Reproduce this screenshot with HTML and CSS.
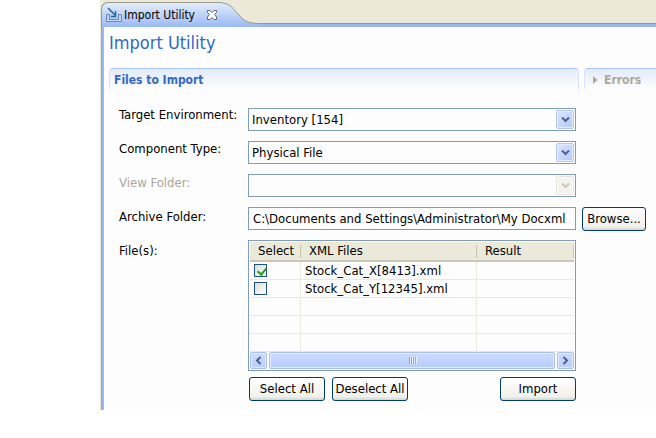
FILE: index.html
```html
<!DOCTYPE html>
<html lang="en">
<head>
<meta charset="utf-8">
<title>Import Utility</title>
<link rel="stylesheet" href="styles.css">
</head>
<body>
<main class="view">
  <header class="tabbar">
    <div class="tab">
      <svg class="tab-icon" width="16" height="16" viewBox="0 0 16 16" aria-hidden="true">
        <path d="M4 7.500H0.500V14.500H15.500V7.500H12" fill="none" stroke="#6e86ae"/>
        <path d="M3.500 7V12.500H12.500V7" fill="none" stroke="#6e86ae"/>
        <path d="M1 13.500H15M2 8V13M14 8V13" stroke="#c7dcf3"/>
        <path d="M2 1L9 8M9.500 4V9.500H5" fill="none" stroke="#27669b" stroke-width="1.500"/>
      </svg>
      <span class="tab-title">Import Utility</span>
      <button class="close" type="button" aria-label="Close">
        <svg width="12" height="12" viewBox="0 0 12 12" aria-hidden="true">
          <path d="M1.500 1.500H4L6 3.500L8 1.500H10.500V3.500L8.500 5.500L10.500 8V10.500H8L6 8.500L4 10.500H1.500V8L3.500 5.500L1.500 3.500Z" fill="#fff" stroke="#68675f"/>
        </svg>
      </button>
    </div>
    <svg class="curve" width="44" height="27" viewBox="0 0 44 27" aria-hidden="true">
      <defs>
        <linearGradient id="tabfill" x1="0" y1="0" x2="0" y2="1">
          <stop offset="0" stop-color="#e4edfc"/>
          <stop offset="1" stop-color="#99b9f4"/>
        </linearGradient>
      </defs>
      <path d="M0 2C13 2 15 9 21 15C27 22 31 23.500 44 23.500V27H0Z" fill="url(#tabfill)"/>
      <path d="M0 2.500C13 2.500 15 9 21 15C27 22 31 23.500 44 23.500" fill="none" stroke="#9a9888"/>
    </svg>
    <div class="rest"></div>
  </header>

  <div class="page">
    <h1>Import Utility</h1>
    <div class="sections">
      <h2 class="section">Files to Import</h2>
      <h2 class="section muted">
        <svg width="5" height="8" viewBox="0 0 5 8" aria-hidden="true"><path d="M0 0L4.500 4L0 8Z" fill="#aca899"/></svg>
        Errors
      </h2>
    </div>

    <form class="form">
      <div class="labels">
        <label for="env">Target Environment:</label>
        <label for="type">Component Type:</label>
        <label for="view" class="off">View Folder:</label>
        <label for="archive">Archive Folder:</label>
        <span id="files">File(s):</span>
      </div>
      <div class="fields">
        <div class="combo">
          <select id="env"><option>Inventory [154]</option></select>
          <span class="drop"><svg width="9" height="7" viewBox="0 0 9 7" aria-hidden="true"><path d="M1 1.500L4.500 5L8 1.500" fill="none" stroke="#4d6185" stroke-width="2"/></svg></span>
        </div>
        <div class="combo">
          <select id="type"><option>Physical File</option></select>
          <span class="drop"><svg width="9" height="7" viewBox="0 0 9 7" aria-hidden="true"><path d="M1 1.500L4.500 5L8 1.500" fill="none" stroke="#4d6185" stroke-width="2"/></svg></span>
        </div>
        <div class="combo">
          <select id="view" disabled></select>
          <span class="drop drop-off"><svg width="9" height="7" viewBox="0 0 9 7" aria-hidden="true"><path d="M1 1.500L4.500 5L8 1.500" fill="none" stroke="#c9c7ba" stroke-width="2"/></svg></span>
        </div>
        <input class="path" id="archive" type="text" value="C:\Documents and Settings\Administrator\My Docxml">
        <div class="list">
          <table aria-labelledby="files">
            <colgroup><col class="c-select"><col class="c-file"><col></colgroup>
            <thead>
              <tr><th>Select</th><th>XML Files</th><th>Result</th></tr>
            </thead>
            <tbody>
              <tr><td><input type="checkbox" aria-label="Select Stock_Cat_X[8413].xml" checked></td><td>Stock_Cat_X[8413].xml</td><td></td></tr>
              <tr><td><input type="checkbox" aria-label="Select Stock_Cat_Y[12345].xml"></td><td>Stock_Cat_Y[12345].xml</td><td></td></tr>
              <tr><td></td><td></td><td></td></tr>
              <tr><td></td><td></td><td></td></tr>
              <tr><td></td><td></td><td></td></tr>
            </tbody>
          </table>
          <div class="scroll">
            <button class="arrow" type="button" aria-label="Scroll left"><svg width="7" height="9" viewBox="0 0 7 9" aria-hidden="true"><path d="M5.500 1L2 4.500L5.500 8" fill="none" stroke="#4d6185" stroke-width="2"/></svg></button>
            <div class="thumb"><i></i><i></i><i></i><i></i></div>
            <button class="arrow" type="button" aria-label="Scroll right"><svg width="7" height="9" viewBox="0 0 7 9" aria-hidden="true"><path d="M1.500 1L5 4.500L1.500 8" fill="none" stroke="#4d6185" stroke-width="2"/></svg></button>
          </div>
        </div>
        <div class="actions">
          <button class="btn" type="button">Select All</button>
          <button class="btn" type="button">Deselect All</button>
          <button class="btn last" type="button">Import</button>
        </div>
      </div>
      <button class="btn browse" type="button">Browse...</button>
    </form>
  </div>
</main>
</body>
</html>
```
FILE: styles.css
```css
* {
  box-sizing: border-box;
}

body {
  margin: 0;
  background: #fff;
  color: #000;
  font: 13px/16px "DejaVu Sans Condensed", "DejaVu Sans", "Noto Sans", sans-serif;
}

button,
input,
select {
  margin: 0;
  font: inherit;
  color: inherit;
}

.view {
  margin-left: 100px;
  border-left: 1px solid #ece9d8;
}

.tabbar {
  display: flex;
  height: 27px;
  background: #ece9d8;
}

.tab {
  display: flex;
  align-items: center;
  width: 117px;
  padding: 0 0 1px 4px;
  border: 1px solid #9a9888;
  border-width: 1px 0 0 1px;
  border-radius: 7px 0 0 0;
  margin-top: 2px;
  background: linear-gradient(#e4edfc, #99b9f4);
  font-size: 12px;
}

.tab-icon {
  flex: none;
}

.tab-title {
  flex: 1;
  margin-left: 2px;
  white-space: nowrap;
}

.close {
  display: flex;
  padding: 0;
  border: 0;
  background: none;
}

.curve {
  flex: none;
}

.rest {
  flex: 1;
  align-self: flex-end;
  height: 4px;
  border-top: 1px solid #9a9888;
  background: #99b9f4;
}

.page {
  padding: 6px 0 9px 7px;
  border-left: 1px solid #aca899;
  background: #fdfdfd;
  box-shadow: inset 2px 0 #99b9f4;
}

h1 {
  margin: 0;
  color: #316ac5;
  font-size: 18px;
  font-weight: 400;
  line-height: 20px;
}

.sections {
  display: grid;
  grid-template-columns: 1fr 72px;
  gap: 5px;
  margin-top: 15px;
}

.section {
  display: flex;
  align-items: center;
  gap: 6px;
  height: 21px;
  margin: 0;
  padding: 2px 4px 0;
  border: 1px solid #d5e3fb;
  border-top-color: #a8c7f8;
  border-bottom: 0;
  border-radius: 4px 4px 0 0;
  background: linear-gradient(#e3ebfa, #fdfdfd);
  color: #316ac5;
  font-size: 12px;
}

.muted {
  padding-left: 8px;
  border-right: 0;
  border-radius: 4px 0 0 0;
  color: #aca899;
}

.form {
  display: grid;
  grid-template-columns: 129px 1fr 70px;
  padding: 9px 10px 0 10px;
}

.labels {
  display: flex;
  flex-direction: column;
  line-height: 34px;
}

.off {
  color: #aca899;
}

.fields {
  display: flex;
  flex-direction: column;
  gap: 10px;
  padding-top: 10px;
}

.combo {
  position: relative;
  height: 23px;
}

.combo select {
  width: 100%;
  height: 100%;
  padding: 0 22px 0 3px;
  border: 1px solid #7f9db9;
  border-radius: 0;
  background: #fdfdfd;
  opacity: 1;
  appearance: none;
}

.drop {
  position: absolute;
  top: 2px;
  right: 2px;
  display: flex;
  align-items: center;
  justify-content: center;
  width: 18px;
  height: 19px;
  border: 1px solid #b5c7ee;
  border-radius: 2px;
  background: linear-gradient(135deg, #dce6ff, #b0c8f8);
  box-shadow: inset 0 0 0 1px #e6eeff;
  pointer-events: none;
}

.drop-off {
  border-color: #e5e3d8;
  background: #f3f2ec;
  box-shadow: inset 0 0 0 1px #fdfdfd;
}

.path {
  width: 100%;
  height: 23px;
  padding: 0 4px;
  border: 1px solid #7f9db9;
  background: #fdfdfd;
}

.list {
  padding: 1px;
  border: 1px solid #7f9db9;
}

table {
  width: 100%;
  border-collapse: separate;
  border-spacing: 0;
  table-layout: fixed;
}

.c-select {
  width: 51px;
}

.c-file {
  width: 176px;
}

th {
  height: 20px;
  padding: 0 0 0 8px;
  border-bottom: 2px solid #cbc7b8;
  background: linear-gradient(#c7c5b2, #c7c5b2) right 3px / 1px 13px no-repeat #ebe9d9;
  font-weight: 400;
  line-height: 18px;
  text-align: left;
}

td {
  height: 18px;
  padding: 0 0 0 4px;
  border: 1px solid #ece9d8;
  border-width: 0 1px 1px 0;
  line-height: 17px;
}

td:last-child {
  border-right: 0;
}

td input {
  display: block;
  width: 13px;
  height: 13px;
  border: 1px solid #1c5180;
  background: linear-gradient(135deg, #dcdcd7, #fff);
  appearance: none;
}

td input:checked::before {
  content: "";
  display: block;
  width: 4px;
  height: 7px;
  margin: 1px 0 0 4px;
  border: solid #21a121;
  border-width: 0 2px 2px 0;
  rotate: 40deg;
}

.scroll {
  display: flex;
  gap: 2px;
  height: 17px;
}

.arrow,
.thumb {
  display: flex;
  align-items: center;
  justify-content: center;
  padding: 0;
  border: 1px solid #a9bff0;
  border-radius: 2px;
  background: linear-gradient(#cddcff, #b8ccfb);
  box-shadow: inset 0 0 0 1px #e2ebff;
}

.arrow {
  width: 17px;
}

.thumb {
  flex: 1;
  gap: 1px;
}

.thumb i {
  width: 1px;
  height: 7px;
  background: #84a5ea;
  box-shadow: 1px 0 #eef4ff;
}

.actions {
  display: flex;
  gap: 7px;
  margin-top: -4px;
  padding-left: 1px;
}

.btn {
  width: 76px;
  height: 24px;
  padding: 0;
  border: 1px solid #003c74;
  border-radius: 3px;
  background: linear-gradient(#fff, #f1f0ea 85%, #d9d4c6);
  white-space: nowrap;
}

.last {
  margin-left: auto;
}

.browse {
  width: 64px;
  margin: 109px 0 0 6px;
}
```
